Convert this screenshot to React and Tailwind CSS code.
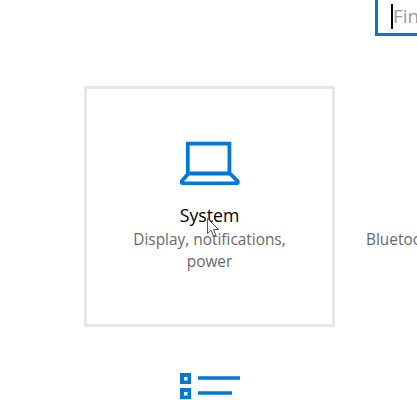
const font = { fontFamily: '"Open Sans", "Noto Sans", sans-serif' }

function LaptopIcon() {
  return (
    <svg width="60" height="44" viewBox="0 0 60 44" fill="none" stroke="#0078d7" strokeWidth="3.8">
      <path d="M7.8 33V2.6h41.6V33" />
      <path d="M8.5 32.5h41.5l7.6 7.6q.8 2.2-1.2 2.2H3q-2-.2-1.1-2.3z" strokeLinejoin="round" />
    </svg>
  )
}

function ListIcon() {
  return (
    <svg width="62" height="28" viewBox="0 0 62 28" fill="none">
      <path d="M1 1h11v11H1zM1 16h11v11H1z" fill="#0078d7" />
      <path d="M5 5h3.5v3.5H5zM5 20h3.5v3.5H5z" fill="#fff" />
      <path d="M19 6h42M19 21h34" stroke="#0078d7" strokeWidth="3.6" />
    </svg>
  )
}

function Cursor() {
  return (
    <svg className="absolute left-[207px] top-[218px]" width="14" height="20" viewBox="0 0 14 20">
      <path d="M.5.5v15l3.6-3.2 2.6 6 2.4-1-2.6-5.8h5z" fill="#fff" stroke="#555" strokeWidth="1" />
    </svg>
  )
}

export default function App() {
  return (
    <div className="relative h-[400px] w-[417px] overflow-hidden bg-white" style={font}>
      {/* Search box */}
      <div className="flex justify-end">
        <div className="-mt-1 flex h-[40px] w-[42px] items-center border-b-[3px] border-l-[3px] border-[#0078d7] pl-[13px]">
          <div className="mt-1 h-[25px] w-[2px] shrink-0 bg-black" />
          <span className="mt-1 text-[19px] text-[#9a9a9a]">Find</span>
        </div>
      </div>

      {/* Tile row */}
      <div className="mt-[50px] flex pl-[84px]">
        <div className="flex h-[241px] w-[251px] shrink-0 flex-col items-center border-[3px] border-[#e6e6e6] pt-[52px]">
          <LaptopIcon />
          <div className="mt-[18px] text-[17.7px] leading-[24px] text-black">System</div>
          <div className="mt-[2px] w-[190px] text-center text-[15.4px] leading-[22px] text-[#696969]">
            Display, notifications, power
          </div>
        </div>
        <div className="ml-[31px] shrink-0 whitespace-nowrap pt-[143px] text-[15.4px] leading-[22px] text-[#696969]">
          Bluetooth, printers, mouse
        </div>
      </div>

      {/* Next row */}
      <div className="mt-[45px] flex pl-[179px]">
        <ListIcon />
      </div>

      <Cursor />
    </div>
  )
}
